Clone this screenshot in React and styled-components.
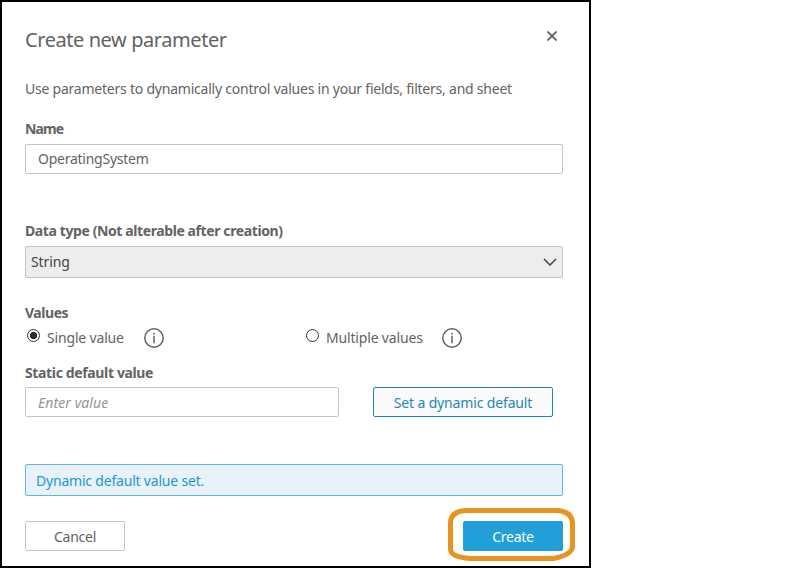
import React, { useState } from 'react';
import styled, { createGlobalStyle } from 'styled-components';

const GlobalStyle = createGlobalStyle`
  *, *::before, *::after { box-sizing: border-box; }
  body {
    margin: 0;
    background: #fff;
    color: #636363;
    font: 14px/20px "Noto Sans", "Open Sans", sans-serif;
  }
  input, select, button { font: inherit; color: inherit; }
`;

const Dialog = styled.form`
  display: flex;
  flex-direction: column;
  width: 591px;
  height: 568px;
  padding: 23px 26px 0 23px;
  border: 2px solid #000;
  background: #fff;
`;

const Header = styled.header`
  display: flex;
  justify-content: space-between;
  align-items: flex-start;
  height: 54px;
`;

const Title = styled.h1`
  margin: 0;
  font-size: 20px;
  line-height: 29px;
  font-weight: 400;
  letter-spacing: -0.43px;
`;

const CloseButton = styled.button`
  display: flex;
  margin: 6px 6px 0 0;
  padding: 0;
  border: 0;
  background: none;
  color: #5c5c5c;
`;

const Description = styled.p`
  margin: 0 0 20px;
  white-space: nowrap;
  letter-spacing: -0.225px;
`;

const Field = styled.section`
  display: flex;
  flex-direction: column;
  gap: ${p => p.$gap ?? 5}px;
  margin-bottom: ${p => p.$after}px;
`;

const Label = styled.label`
  font-weight: 700;
  white-space: nowrap;
  letter-spacing: ${p => p.$spacing}px;
`;

const TextInput = styled.input`
  width: ${p => p.$width ?? '100%'};
  height: 30px;
  padding: ${p => p.$padding};
  border: 1px solid #c4c4c4;
  border-radius: 2px;
  background: #fff;
  outline: 0;
  letter-spacing: -0.25px;

  &::placeholder {
    color: #959595;
    opacity: 1;
    font-style: italic;
    letter-spacing: 0.08px;
  }
`;

const SelectBox = styled.div`
  display: flex;
  align-items: center;
  justify-content: space-between;
  height: 32px;
  padding: 0 5px;
  border: 1px solid #c4c4c4;
  border-radius: 2px;
  background: #ededed;
  color: #444;
  letter-spacing: -0.1px;
`;

const RadioRow = styled.div`
  display: grid;
  grid-template-columns: 279px 1fr;
  height: 20px;
`;

const RadioOption = styled.div`
  display: flex;
  align-items: flex-start;
  padding-left: 2px;
`;

const RadioLabel = styled.label`
  display: flex;
  gap: 7px;
  margin-right: 20px;
  width: ${p => p.$width}px;
  white-space: nowrap;
  letter-spacing: -0.17px;
`;

const Radio = styled.input`
  appearance: none;
  flex: none;
  width: 13px;
  height: 13px;
  margin: 1px 0 0;
  border: 1px solid #333;
  border-radius: 50%;
  background: #fff;

  &:checked {
    background: radial-gradient(circle, #2b2b2b 3.2px, #fff 4.1px);
  }
`;

const DefaultRow = styled.div`
  display: flex;
  gap: 34px;
`;

const Button = styled.button`
  width: ${p => p.$width ?? 100}px;
  height: 30px;
  padding: 1px 0 0;
  border: 1px solid ${p => p.$border};
  border-radius: 2px;
  background: ${p => p.$fill};
  color: ${p => p.$ink};
  letter-spacing: ${p => p.$spacing ?? -0.25}px;
`;

const Notice = styled.div`
  display: flex;
  align-items: center;
  height: 32px;
  margin-bottom: 25px;
  padding: 1px 10px 0;
  border: 1px solid #5fb8df;
  border-radius: 2px;
  background: #e8f2f8;
  color: #1f97d0;
  letter-spacing: -0.2px;
`;

const Footer = styled.footer`
  display: flex;
  justify-content: space-between;
`;

const Highlighted = styled.div`
  position: relative;
  height: 30px;
`;

const HighlightRing = styled.svg`
  position: absolute;
  left: -15px;
  top: -13px;
  pointer-events: none;
`;

function CloseIcon() {
  return (
    <svg width="10" height="10" viewBox="0 0 10 10" fill="none" stroke="currentColor" strokeWidth="1.8">
      <path d="M.5.5l9 9M9.5.5l-9 9" />
    </svg>
  );
}

function ChevronIcon() {
  return (
    <svg width="14" height="8" viewBox="0 0 14 8" fill="none" stroke="#444" strokeWidth="1.5">
      <path d="M1 1l6 6 6-6" />
    </svg>
  );
}

function InfoIcon() {
  return (
    <svg width="20" height="20" viewBox="0 0 20 20" fill="none" stroke="#636363" strokeWidth="1.5">
      <circle cx="10" cy="10" r="9.2" />
      <path d="M10 7.8v7.4M10 4.8v1.6" />
    </svg>
  );
}

export default function App() {
  const [name, setName] = useState('OperatingSystem');
  const [value, setValue] = useState('');
  const [mode, setMode] = useState('single');

  return (
    <>
      <GlobalStyle />
      <Dialog onSubmit={e => e.preventDefault()}>
        <Header>
          <Title>Create new parameter</Title>
          <CloseButton type="button" aria-label="Close"><CloseIcon /></CloseButton>
        </Header>
        <Description>
          Use parameters to dynamically control values in your fields, filters, and sheet
        </Description>

        <Field $after={47}>
          <Label htmlFor="name" $spacing={-0.9}>Name</Label>
          <TextInput id="name" $padding="0 12px 1px" value={name} onChange={e => setName(e.target.value)} />
        </Field>

        <Field $after={25}>
          <Label $spacing={-0.4}>Data type (Not alterable after creation)</Label>
          <SelectBox role="combobox">
            <span>String</span>
            <ChevronIcon />
          </SelectBox>
        </Field>

        <Field $after={15}>
          <Label as="span" $spacing={-0.45}>Values</Label>
          <RadioRow>
            <RadioOption>
              <RadioLabel $width={97}>
                <Radio type="radio" name="mode" checked={mode === 'single'} onChange={() => setMode('single')} />
                Single value
              </RadioLabel>
              <InfoIcon />
            </RadioOption>
            <RadioOption>
              <RadioLabel $width={116}>
                <Radio type="radio" name="mode" checked={mode === 'multiple'} onChange={() => setMode('multiple')} />
                Multiple values
              </RadioLabel>
              <InfoIcon />
            </RadioOption>
          </RadioRow>
        </Field>

        <Field $gap={4} $after={47}>
          <Label htmlFor="value" $spacing={-0.36}>Static default value</Label>
          <DefaultRow>
            <TextInput
              id="value"
              $width="314px"
              $padding="1px 12px 0"
              placeholder="Enter value"
              value={value}
              onChange={e => setValue(e.target.value)}
            />
            <Button type="button" $width={180} $spacing={-0.15} $border="#1f88b8" $fill="#fafafa" $ink="#1f88b8">
              Set a dynamic default
            </Button>
          </DefaultRow>
        </Field>

        <Notice>Dynamic default value set.</Notice>

        <Footer>
          <Button type="button" $border="#c4c4c4" $fill="#fff" $ink="#636363">Cancel</Button>
          <Highlighted>
            <Button $border="#219fd8" $fill="#219fd8" $ink="#fff">Create</Button>
            <HighlightRing width="127" height="53" viewBox="0 0 127 53" fill="none" stroke="#e8921f" strokeWidth="5">
              <path d="M17 2.5H110Q124.500 4 124.500 16V38Q124.500 47 105 50.500H22Q2.500 49 2.500 41V15Q2.500 4 17 2.500Z" />
            </HighlightRing>
          </Highlighted>
        </Footer>
      </Dialog>
    </>
  );
}
